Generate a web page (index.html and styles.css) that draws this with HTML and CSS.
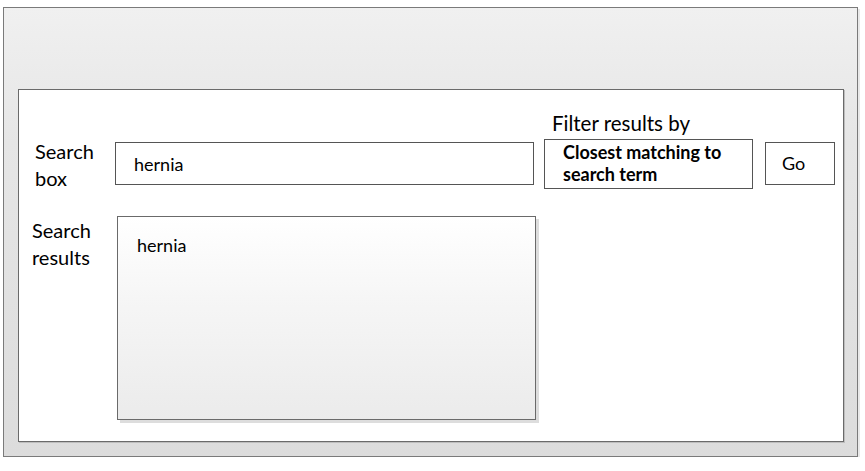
FILE: index.html
```html
<!DOCTYPE html>
<html>
<head>
<meta charset="utf-8">
<link rel="stylesheet" href="styles.css">
</head>
<body>
<div class="frame">
  <div class="panel">
    <div class="row-top">
      <div class="label label-box">Search<br>box</div>
      <div class="input">hernia</div>
      <div class="filter">
        <div class="filter-label">Filter results by</div>
        <div class="filter-box">Closest matching to<br>search term</div>
      </div>
      <div class="go">Go</div>
    </div>
    <div class="row-results">
      <div class="label label-results">Search<br>results</div>
      <div class="results">hernia</div>
    </div>
  </div>
</div>
</body>
</html>
```

FILE: styles.css
```css
html, body {
  margin: 0;
  padding: 0;
  background: #ffffff;
}

body {
  font-family: Lato, "Open Sans", sans-serif;
  color: #000;
}

.frame {
  box-sizing: border-box;
  width: 855px;
  height: 450px;
  margin: 7px 0 0 3px;
  border: 1px solid #7a7a7a;
  background: linear-gradient(#f0f0f0, #e6e6e6 30%, #dcdcdc);
  box-shadow: 2px 2px 0 #e9e9e9;
  overflow: hidden;
}

.panel {
  box-sizing: border-box;
  height: 353px;
  margin: 81px 13px 0 14px;
  border: 1px solid #6a6a6a;
  background: #ffffff;
  box-shadow: 1px 1px 0 #bdbdbd;
}

.row-top {
  display: flex;
  align-items: flex-start;
  height: 99px;
}

.label {
  font-size: 20px;
  line-height: 27px;
}

.label-box {
  flex: 0 0 80px;
  margin: 48px 0 0 16px;
}

.input {
  box-sizing: border-box;
  flex: 0 0 419px;
  height: 43px;
  margin-top: 52px;
  border: 1px solid #555;
  padding-left: 18px;
  display: flex;
  align-items: center;
  font-size: 18px;
  line-height: 22px;
}

.filter {
  margin: 22px 0 0 10px;
  display: flex;
  flex-direction: column;
}

.filter-label {
  margin-left: 8px;
  font-size: 20.5px;
  line-height: 22px;
}

.filter-box {
  box-sizing: border-box;
  width: 209px;
  height: 50px;
  margin-top: 5px;
  border: 1px solid #555;
  padding: 1px 0 0 18px;
  font-size: 18px;
  font-weight: 700;
  line-height: 22px;
}

.go {
  box-sizing: border-box;
  flex: 0 0 70px;
  height: 43px;
  margin: 52px 0 0 12px;
  border: 1px solid #555;
  padding: 0 0 2px 16px;
  display: flex;
  align-items: center;
  font-size: 18px;
}

.row-results {
  display: flex;
  align-items: flex-start;
  margin-top: 27px;
}

.label-results {
  flex: 0 0 85px;
  margin: 1px 0 0 13px;
}

.results {
  box-sizing: border-box;
  flex: 0 0 419px;
  height: 204px;
  border: 1px solid #6a6a6a;
  background: linear-gradient(#ffffff, #f6f6f6 40%, #ebebeb);
  box-shadow: 3px 3px 0 #dddddd;
  padding: 17px 0 0 19px;
  font-size: 18px;
  line-height: 22px;
}
```
